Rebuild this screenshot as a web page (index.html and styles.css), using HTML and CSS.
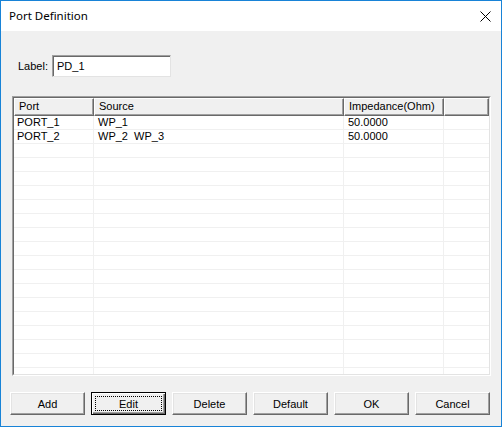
FILE: index.html
```html
<!DOCTYPE html>
<html>
<head>
<meta charset="utf-8">
<link rel="stylesheet" href="styles.css">
</head>
<body>
<div class="window">
  <div class="titlebar">
    <span class="title">Port Definition</span>
    <span class="close">
      <svg width="11" height="11" viewBox="0 0 11 11"><path d="M0.5 0.5 L10.5 10.5 M10.5 0.5 L0.5 10.5" stroke="#000" stroke-width="1" fill="none"/></svg>
    </span>
  </div>
  <div class="content">
    <div class="label-row">
      <span class="label">Label:</span>
      <div class="input">PD_1</div>
    </div>
    <div class="list">
      <div class="list-inner">
        <div class="header">
          <div class="hcell c1">Port</div>
          <div class="hcell c2">Source</div>
          <div class="hcell c3">Impedance(Ohm)</div>
          <div class="hcell c4"></div>
        </div>
        <div class="rows">
          <div class="row"><div class="cell c1">PORT_1</div><div class="cell c2">WP_1</div><div class="cell c3">50.0000</div><div class="cell c4"></div></div>
          <div class="row"><div class="cell c1">PORT_2</div><div class="cell c2">WP_2&nbsp;&nbsp;WP_3</div><div class="cell c3">50.0000</div><div class="cell c4"></div></div>
          <div class="row"><div class="cell c1"></div><div class="cell c2"></div><div class="cell c3"></div><div class="cell c4"></div></div>
          <div class="row"><div class="cell c1"></div><div class="cell c2"></div><div class="cell c3"></div><div class="cell c4"></div></div>
          <div class="row"><div class="cell c1"></div><div class="cell c2"></div><div class="cell c3"></div><div class="cell c4"></div></div>
          <div class="row"><div class="cell c1"></div><div class="cell c2"></div><div class="cell c3"></div><div class="cell c4"></div></div>
          <div class="row"><div class="cell c1"></div><div class="cell c2"></div><div class="cell c3"></div><div class="cell c4"></div></div>
          <div class="row"><div class="cell c1"></div><div class="cell c2"></div><div class="cell c3"></div><div class="cell c4"></div></div>
          <div class="row"><div class="cell c1"></div><div class="cell c2"></div><div class="cell c3"></div><div class="cell c4"></div></div>
          <div class="row"><div class="cell c1"></div><div class="cell c2"></div><div class="cell c3"></div><div class="cell c4"></div></div>
          <div class="row"><div class="cell c1"></div><div class="cell c2"></div><div class="cell c3"></div><div class="cell c4"></div></div>
          <div class="row"><div class="cell c1"></div><div class="cell c2"></div><div class="cell c3"></div><div class="cell c4"></div></div>
          <div class="row"><div class="cell c1"></div><div class="cell c2"></div><div class="cell c3"></div><div class="cell c4"></div></div>
          <div class="row"><div class="cell c1"></div><div class="cell c2"></div><div class="cell c3"></div><div class="cell c4"></div></div>
          <div class="row"><div class="cell c1"></div><div class="cell c2"></div><div class="cell c3"></div><div class="cell c4"></div></div>
          <div class="row"><div class="cell c1"></div><div class="cell c2"></div><div class="cell c3"></div><div class="cell c4"></div></div>
          <div class="row"><div class="cell c1"></div><div class="cell c2"></div><div class="cell c3"></div><div class="cell c4"></div></div>
          <div class="row"><div class="cell c1"></div><div class="cell c2"></div><div class="cell c3"></div><div class="cell c4"></div></div>
          <div class="row"><div class="cell c1"></div><div class="cell c2"></div><div class="cell c3"></div><div class="cell c4"></div></div>
        </div>
      </div>
    </div>
    <div class="buttons">
      <div class="btn">Add</div>
      <div class="btn default"><span class="focus">Edit</span></div>
      <div class="btn">Delete</div>
      <div class="btn">Default</div>
      <div class="btn">OK</div>
      <div class="btn">Cancel</div>
    </div>
  </div>
</div>
</body>
</html>
```
FILE: styles.css
```css
html, body {
  margin: 0;
  padding: 0;
  background: #ffffff;
}
.window {
  box-sizing: border-box;
  width: 502px;
  height: 427px;
  border: 1px solid #1883d7;
  background: #f0f0f0;
  display: flex;
  flex-direction: column;
  overflow: hidden;
  font-family: "Liberation Sans", Arial, sans-serif;
  font-size: 11px;
  color: #000;
}
.titlebar {
  height: 30px;
  background: #ffffff;
  display: flex;
  align-items: center;
  justify-content: space-between;
  flex: none;
}
.title {
  font-family: "Noto Sans", "Open Sans", sans-serif;
  font-size: 11.5px;
  margin-left: 8px;
  margin-top: -1px;
}
.close {
  width: 11px;
  height: 11px;
  margin-right: 10px;
  display: flex;
}
.content {
  flex: 1;
  display: flex;
  flex-direction: column;
}
.label-row {
  display: flex;
  align-items: center;
  margin: 24px 0 0 17px;
  height: 22px;
}
.label {
  width: 34px;
}
.input {
  box-sizing: border-box;
  width: 119px;
  height: 22px;
  background: #fff;
  border: 1px solid #a0a0a0;
  border-right-color: #e3e3e3;
  border-bottom-color: #e3e3e3;
  box-shadow: inset 1px 1px 0 #696969;
  padding: 0 0 0 4px;
  line-height: 20px;
}
.list {
  box-sizing: border-box;
  margin: 19px 0 0 11px;
  width: 479px;
  height: 280px;
  border: 1px solid #a0a0a0;
  border-right-color: #ffffff;
  border-bottom-color: #ffffff;
  flex: none;
}
.list-inner {
  box-sizing: border-box;
  width: 100%;
  height: 100%;
  border: 1px solid #696969;
  border-right-color: #e3e3e3;
  border-bottom-color: #e3e3e3;
  background: #fff;
  overflow: hidden;
}
.header {
  display: flex;
  height: 18px;
  background: #f0f0f0;
}
.hcell {
  box-sizing: border-box;
  height: 18px;
  border-top: 1px solid #ffffff;
  border-left: 1px solid #ffffff;
  border-right: 1px solid #696969;
  border-bottom: 1px solid #696969;
  box-shadow: inset -1px -1px 0 #a0a0a0;
  padding-left: 4px;
  line-height: 15px;
  white-space: nowrap;
}
.c1 { width: 80px; }
.c2 { width: 250px; }
.c3 { width: 100px; }
.c4 { width: 45px; }
.rows {
  display: flex;
  flex-direction: column;
}
.row {
  display: flex;
  height: 14px;
  flex: none;
}
.cell {
  box-sizing: border-box;
  height: 14px;
  border-right: 1px solid #f0f0f0;
  border-bottom: 1px solid #f0f0f0;
  line-height: 12px;
  padding-left: 4px;
  white-space: nowrap;
}
.cell.c1 { padding-left: 3px; }
.cell.c4 { border-right: none; }
.buttons {
  display: flex;
  gap: 6px;
  margin: 16px 0 0 9px;
}
.btn {
  box-sizing: border-box;
  width: 75px;
  height: 23px;
  background: #f0f0f0;
  border-top: 1px solid #ffffff;
  border-left: 1px solid #ffffff;
  border-right: 1px solid #696969;
  border-bottom: 1px solid #696969;
  box-shadow: inset -1px -1px 0 #a0a0a0, inset 1px 1px 0 #e3e3e3;
  display: flex;
  align-items: center;
  justify-content: center;
  padding-top: 1px;
}
.btn.default {
  border: 1px solid #000;
  box-shadow: inset 1px 1px 0 #ffffff, inset -1px -1px 0 #696969, inset -2px -2px 0 #a0a0a0;
  padding: 3px;
}
.focus {
  box-sizing: border-box;
  width: 100%;
  height: 100%;
  border: 1px dotted #000;
  display: flex;
  align-items: center;
  justify-content: center;
}
```
